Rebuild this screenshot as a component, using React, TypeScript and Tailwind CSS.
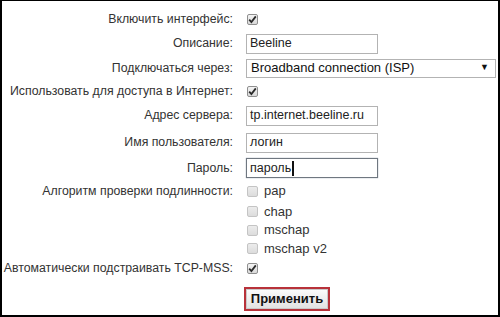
import React from 'react';

const font = { fontFamily: '"Liberation Sans", Arial, sans-serif' };

const Check: React.FC<{ checked?: boolean }> = ({ checked }) => (
  <span
    className={`ml-[1px] flex h-[11px] w-[11px] items-center justify-center rounded-[2px] border ${
      checked
        ? 'border-[#8f8f8f] bg-gradient-to-b from-[#f4f4f4] to-[#d9d9d9]'
        : 'border-[#c4c4c4] bg-gradient-to-b from-[#ececec] to-[#dcdcdc]'
    }`}
  >
    {checked && (
      <svg width="9" height="9" viewBox="0 0 9 9">
        <path d="M1.2 4.6 L3.4 7 L7.8 1.4" fill="none" stroke="#2a2a2a" strokeWidth="1.8" />
      </svg>
    )}
  </span>
);

const TextBox: React.FC<{ value: string; focused?: boolean }> = ({ value, focused }) => (
  <div
    className={`flex h-[20px] w-[132px] items-center whitespace-nowrap border bg-white pl-[3px] text-[12.5px] text-[#222] ${
      focused ? 'border-[#6f7780] shadow-[0_0_1px_#8a96a3]' : 'border-[#b3b3b3]'
    }`}
  >
    {value}
    {focused && <span className="ml-[1px] inline-block h-[15px] w-[2px] bg-[#111]" />}
  </div>
);

const Row: React.FC<{ label?: string; h: string; children?: React.ReactNode }> = ({ label, h, children }) => (
  <div className={`flex items-center ${h}`}>
    <div className="w-[232px] whitespace-nowrap pr-[1px] text-right text-[12.3px] text-[#333]">{label}</div>
    <div className="ml-[12px] flex items-center">{children}</div>
  </div>
);

const Auth: React.FC<{ name: string; h: string }> = ({ name, h }) => (
  <Row h={h}>
    <Check />
    <span className="ml-[6px] text-[13px] text-[#333]">{name}</span>
  </Row>
);

export default function App() {
  return (
    <div
      style={font}
      className="h-[317px] w-[500px] border-x-2 border-b-2 border-t border-black bg-white pt-[7px]"
    >
      <Row label="Включить интерфейс:" h="h-[23px]">
        <Check checked />
      </Row>
      <Row label="Описание:" h="h-[25px]">
        <TextBox value="Beeline" />
      </Row>
      <Row label="Подключаться через:" h="h-[24px]">
        <div className="flex h-[19px] w-[250px] items-center justify-between whitespace-nowrap border border-[#b3b3b3] bg-white pl-[4px] pr-[6px] text-[13px] text-[#111]">
          <span>Broadband connection (ISP)</span>
          <span className="text-[9px]">▼</span>
        </div>
      </Row>
      <Row label="Использовать для доступа в Интернет:" h="h-[22px]">
        <Check checked />
      </Row>
      <Row label="Адрес сервера:" h="h-[27px]">
        <TextBox value="tp.internet.beeline.ru" />
      </Row>
      <Row label="Имя пользователя:" h="h-[27px]">
        <TextBox value="логин" />
      </Row>
      <Row label="Пароль:" h="h-[24px]">
        <TextBox value="пароль" focused />
      </Row>
      <Row label="Алгоритм проверки подлинности:" h="h-[22px]">
        <Check />
        <span className="ml-[6px] text-[13px] text-[#333]">pap</span>
      </Row>
      <Auth name="chap" h="h-[19px]" />
      <Auth name="mschap" h="h-[18px]" />
      <Auth name="mschap v2" h="h-[19px]" />
      <Row label="Автоматически подстраивать TCP-MSS:" h="h-[20px]">
        <Check checked />
      </Row>
      <div className="mt-[9px] flex pl-[242px]">
        <button className="h-[24px] w-[86px] border-2 border-[#b8323a] p-0">
          <span className="flex h-full w-full items-center justify-center border border-[#c9c9c9] bg-gradient-to-b from-[#fbfbfb] to-[#e2e2e2] text-[13px] font-bold text-[#111]">
            Применить
          </span>
        </button>
      </div>
    </div>
  );
}
